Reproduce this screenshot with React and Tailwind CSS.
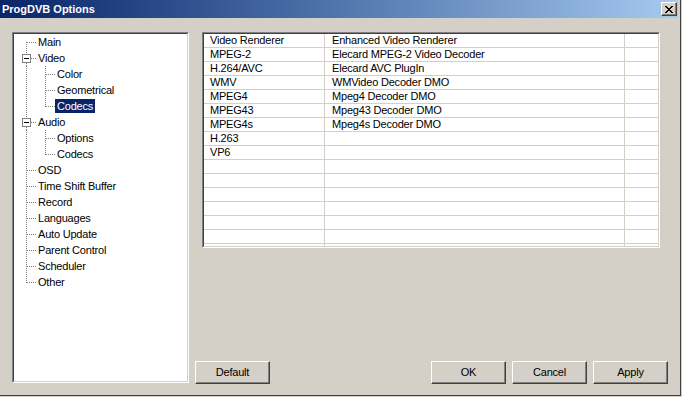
import React from "react";

const treeItems = [
  { label: "Main", level: 0, first: true },
  { label: "Video", level: 0, box: true },
  { label: "Color", level: 1 },
  { label: "Geometrical", level: 1 },
  { label: "Codecs", level: 1, lastChild: true, selected: true },
  { label: "Audio", level: 0, box: true },
  { label: "Options", level: 1 },
  { label: "Codecs", level: 1, lastChild: true },
  { label: "OSD", level: 0 },
  { label: "Time Shift Buffer", level: 0 },
  { label: "Record", level: 0 },
  { label: "Languages", level: 0 },
  { label: "Auto Update", level: 0 },
  { label: "Parent Control", level: 0 },
  { label: "Scheduler", level: 0 },
  { label: "Other", level: 0, last: true },
];

const rows = [
  ["Video Renderer", "Enhanced Video Renderer"],
  ["MPEG-2", "Elecard MPEG-2 Video Decoder"],
  ["H.264/AVC", "Elecard AVC PlugIn"],
  ["WMV", "WMVideo Decoder DMO"],
  ["MPEG4", "Mpeg4 Decoder DMO"],
  ["MPEG43", "Mpeg43 Decoder DMO"],
  ["MPEG4s", "Mpeg4s Decoder DMO"],
  ["H.263", ""],
  ["VP6", ""],
  ["", ""],
  ["", ""],
  ["", ""],
  ["", ""],
  ["", ""],
  ["", ""],
  ["", ""],
];

function Connector({ item }) {
  const w = item.level === 0 ? 22 : 41;
  const dot = { stroke: "#808080", strokeWidth: 1, strokeDasharray: "1 1", shapeRendering: "crispEdges" };
  const lines = [];
  if (item.level === 0) {
    if (item.box) {
      lines.push(<line key="v1" x1="12.5" y1="0" x2="12.5" y2="4" style={dot} />);
      lines.push(<line key="v2" x1="12.5" y1="13" x2="12.5" y2="16" style={dot} />);
      lines.push(<line key="h" x1="17" y1="8.5" x2="22" y2="8.5" style={dot} />);
    } else {
      const y1 = item.first ? 8 : 0;
      const y2 = item.last ? 9 : 16;
      lines.push(<line key="v" x1="12.5" y1={y1} x2="12.5" y2={y2} style={dot} />);
      lines.push(<line key="h" x1="13" y1="8.5" x2="22" y2="8.5" style={dot} />);
    }
  } else {
    lines.push(<line key="r" x1="12.5" y1="0" x2="12.5" y2="16" style={dot} />);
    lines.push(<line key="v" x1="31.5" y1="0" x2="31.5" y2={item.lastChild ? 9 : 16} style={dot} />);
    lines.push(<line key="h" x1="32" y1="8.5" x2="41" y2="8.5" style={dot} />);
  }
  return (
    <svg width={w} height="16" className="shrink-0 block">
      {lines}
      {item.box && (
        <g shapeRendering="crispEdges">
          <rect x="8.5" y="4.5" width="8" height="8" fill="#ffffff" stroke="#808080" strokeWidth="1" />
          <line x1="10" y1="8.5" x2="15" y2="8.5" stroke="#000000" strokeWidth="1" />
        </g>
      )}
    </svg>
  );
}

function Button({ children, className = "" }) {
  return (
    <div
      className={
        "w-[75px] h-[23px] border border-t-white border-l-white border-r-[#404040] border-b-[#404040] shadow-[inset_-1px_-1px_#808080] flex items-center justify-center text-[11px] tracking-[-0.2px] text-black " +
        className
      }
    >
      {children}
    </div>
  );
}

export default function App() {
  return (
    <div className="w-[682px] h-[397px] bg-[#d4d0c8] font-['Liberation_Sans',Arial,sans-serif] text-[11px] text-black overflow-hidden">
      <div className="w-[681px] h-[396px] border-r border-b border-[#404040] flex flex-col">
        <div className="mr-[2px] h-[18px] bg-gradient-to-r from-[#0a246a] to-[#a6caf0] flex items-center justify-between pl-[2px] pr-[1px]">
          <span className="text-white font-bold text-[11px] leading-[18px]">ProgDVB Options</span>
          <div className="w-[16px] h-[14px] bg-[#d4d0c8] border border-t-white border-l-white border-r-[#404040] border-b-[#404040] shadow-[inset_-1px_-1px_#808080] flex items-center justify-center">
            <svg width="8" height="7" viewBox="0 0 8 7" shapeRendering="crispEdges">
              <path d="M0 0h2v1h-2z M6 0h2v1h-2z M1 1h2v1h-2z M5 1h2v1h-2z M2 2h4v1h-4z M3 3h2v1h-2z M2 4h4v1h-4z M1 5h2v1h-2z M5 5h2v1h-2z M0 6h2v1h-2z M6 6h2v1h-2z" fill="#000" />
            </svg>
          </div>
        </div>

        <div className="flex flex-row pl-[12px] pt-[14px]">
          {/* Tree */}
          <div className="w-[177px] h-[351px] border border-t-[#808080] border-l-[#808080] border-r-white border-b-white">
            <div className="w-full h-full bg-white border border-t-[#404040] border-l-[#404040] border-r-[#d4d0c8] border-b-[#d4d0c8] tracking-[-0.2px]">
              {treeItems.map((item, i) => (
                <div key={i} className="flex flex-row items-start h-[16px]">
                  <Connector item={item} />
                  <span
                    className={
                      "mt-[1px] h-[14px] leading-[14px] px-[2px] whitespace-nowrap " +
                      (item.selected ? "bg-[#0a246a] text-white" : "text-black")
                    }
                  >
                    {item.label}
                  </span>
                </div>
              ))}
            </div>
          </div>

          {/* Right column */}
          <div className="ml-[6px] h-[352px] flex flex-col">
            <div className="ml-[7px] w-[458px] h-[216px] border border-t-[#808080] border-l-[#808080] border-r-white border-b-white">
              <div className="w-full h-full bg-white border border-t-[#404040] border-l-[#404040] border-r-[#d4d0c8] border-b-[#d4d0c8] overflow-hidden tracking-[-0.2px]">
                {rows.map((r, i) => (
                  <div key={i} className="flex flex-row h-[14px] border-b border-[#d4d0c8] leading-[13px]">
                    <div className="w-[121px] shrink-0 border-r border-[#d4d0c8] pl-[6px] whitespace-nowrap">{r[0]}</div>
                    <div className="w-[300px] shrink-0 border-r border-[#d4d0c8] pl-[7px] whitespace-nowrap">{r[1]}</div>
                    <div className="flex-1"></div>
                  </div>
                ))}
              </div>
            </div>
            <div className="mt-auto flex flex-row">
              <Button>Default</Button>
              <Button className="ml-[161px]">OK</Button>
              <Button className="ml-[6px]">Cancel</Button>
              <Button className="ml-[6px]">Apply</Button>
            </div>
          </div>
        </div>
      </div>
    </div>
  );
}
